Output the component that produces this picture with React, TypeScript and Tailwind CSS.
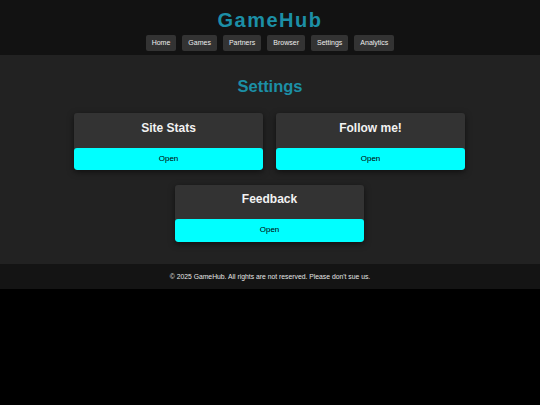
const navItems = ["Home", "Games", "Partners", "Browser", "Settings", "Analytics"];
const panels = ["Site Stats", "Follow me!", "Feedback"];

function Panel({ title }: { title: string }) {
  return (
    <div className="w-[189px] overflow-hidden rounded-[3px] bg-[#333] shadow-[0_2px_6px_rgba(0,0,0,0.55)]">
      <h3 className="h-[34.5px] pt-[7.5px] text-center text-[12px] font-bold leading-[14px] text-[#f2f2f2]">
        {title}
      </h3>
      <button
        type="button"
        className="block h-[22.5px] w-full rounded-[3px] bg-[#00ffff] text-center text-[8px] leading-[22.5px] text-black"
      >
        Open
      </button>
    </div>
  );
}

export default function App() {
  return (
    <div className="min-h-[405px] bg-black font-['Liberation_Sans',Arial,sans-serif]">
      <header className="bg-[#121212] pt-[9px] pb-[4px]">
        <h1 className="text-center text-[20px] font-bold leading-[22px] tracking-[1.5px] text-[#1c8fa6]">
          GameHub
        </h1>
        <nav className="mt-[4px] flex justify-center gap-[6px]">
          {navItems.map((item) => (
            <a
              key={item}
              href="#"
              className="h-[16px] rounded-[2px] bg-[#333] px-[6px] text-[7px] leading-[16px] text-[#eee]"
            >
              {item}
            </a>
          ))}
        </nav>
      </header>

      <main className="h-[209px] bg-[#222] pt-[20.5px]">
        <h2 className="text-center text-[16.5px] font-bold leading-[20px] text-[#1c8fa6]">Settings</h2>
        <div className="ml-[74px] mt-[17.5px] flex w-[391px] flex-wrap justify-center gap-x-[13px] gap-y-[14.5px]">
          {panels.map((p) => (
            <Panel key={p} title={p} />
          ))}
        </div>
      </main>

      <footer className="h-[25px] bg-[#141414] text-center text-[6.8px] leading-[25px] text-[#e6e6e6]">
        © 2025 GameHub. All rights are not reserved. Please don't sue us.
      </footer>
    </div>
  );
}
